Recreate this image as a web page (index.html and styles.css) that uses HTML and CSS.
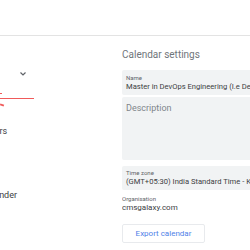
FILE: index.html
```html
<!DOCTYPE html>
<html lang="en">
<head>
    <meta charset="UTF-8">
    <title>Calendar settings</title>
    <link rel="stylesheet" href="styles.css">
</head>
<body>

    <header class="topbar"></header>

    <div class="page">
        <nav class="sidebar">
            <div class="nav-head">
                <span class="chevron">
                    <svg width="6" height="4" viewBox="0 0 6 4"><path d="M0.5 0.5 L3 3 L5.5 0.5" fill="none" stroke="#5f6368" stroke-width="1.2"/></svg>
                </span>
            </div>
            <div class="mark">
                <span class="mark-top"></span>
                <span class="mark-line"></span>
                <span class="mark-bottom"></span>
            </div>
            <div class="nav-item nav-first">Settings for my calendars</div>
            <div class="nav-item nav-second">Remove calender</div>
        </nav>

        <main class="content">
            <h2 class="title">Calendar settings</h2>

            <div class="field">
                <div class="field-label">Name</div>
                <div class="field-value">Master in DevOps Engineering (I.e DevOps)</div>
            </div>

            <div class="field field-desc">
                <div class="placeholder">Description</div>
            </div>

            <div class="field field-tz">
                <div class="field-label">Time zone</div>
                <div class="field-value">(GMT+05:30) India Standard Time - Kolkata</div>
            </div>

            <div class="org">
                <div class="field-label">Organisation</div>
                <div class="org-value">cmsgalaxy.com</div>
            </div>

            <button class="export-btn">Export calendar</button>
        </main>
    </div>

</body>
</html>
```

FILE: styles.css
```css
body {
    margin: 0;
    font-family: Roboto, "Liberation Sans", sans-serif;
    background-color: #fff;
    overflow: hidden;
}

.topbar {
    height: 35px;
    border-bottom: 1px solid #e3e3e3;
}

.page {
    display: flex;
}

.sidebar {
    width: 122px;
    flex-shrink: 0;
    overflow: hidden;
}

.nav-head {
    height: 15px;
    margin-top: 36px;
    padding-left: 20px;
}

.chevron svg {
    display: block;
    margin-top: 2px;
}

.mark {
    position: relative;
    height: 20px;
}

.mark span {
    position: absolute;
    left: 0;
    background-color: #f05a5a;
}

.mark-top {
    top: 6px;
    width: 2px;
    height: 1px;
}

.mark-line {
    top: 11px;
    width: 34px;
    height: 1px;
}

.mark-bottom {
    top: 17px;
    width: 4px;
    height: 2px;
    transform: rotate(20deg);
}

.nav-item {
    font-size: 9px;
    line-height: 11px;
    color: #3c4043;
    white-space: nowrap;
}

.nav-first {
    margin-top: 19px;
    margin-left: -95px;
}

.nav-second {
    margin-top: 53px;
    margin-left: -52px;
}

.content {
    flex: 1;
    min-width: 0;
    overflow: hidden;
}

.title {
    margin: 12px 0 9px;
    font-size: 10px;
    line-height: 13px;
    font-weight: normal;
    color: #70757a;
}

.field {
    background-color: #f1f3f4;
    border-radius: 2px;
    height: 25px;
    width: 200px;
    padding: 4px 4px 0;
    box-sizing: border-box;
    margin-bottom: 2px;
    white-space: nowrap;
}

.field-label {
    font-size: 6px;
    color: #5f6368;
    line-height: 8px;
}

.field-value {
    font-size: 7.6px;
    color: #3c4043;
    line-height: 10px;
}

.field-desc {
    height: 63px;
    padding-top: 6px;
    margin-bottom: 6px;
}

.field-tz {
    height: 24px;
    padding-top: 3px;
}

.placeholder {
    font-size: 9px;
    color: #80868b;
}

.org {
    margin-top: 5px;
    white-space: nowrap;
}

.org-value {
    font-size: 8px;
    color: #3c4043;
    line-height: 10px;
}

.export-btn {
    display: block;
    margin-top: 11px;
    width: 83px;
    height: 19px;
    background-color: #fff;
    border: 1px solid #e8eaed;
    border-radius: 2px;
    font-family: Roboto, "Liberation Sans", sans-serif;
    font-size: 8px;
    color: #4f7fe8;
    padding: 0;
    cursor: pointer;
}
```
